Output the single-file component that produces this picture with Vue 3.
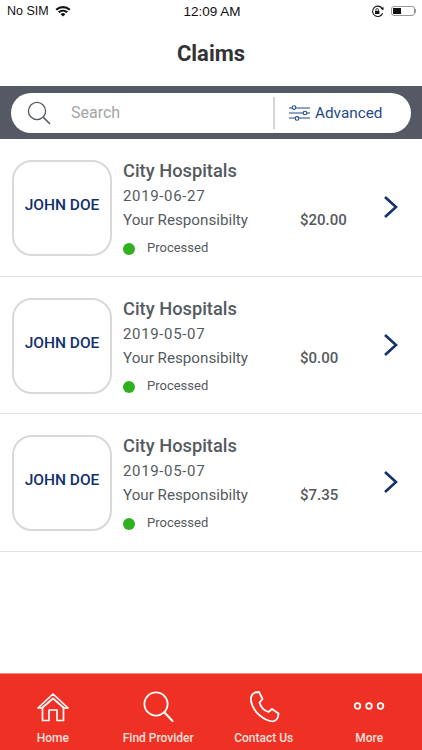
<script setup>
const claims = [
  { id: 1, name: 'JOHN DOE', provider: 'City Hospitals', date: '2019-06-27', amount: '$20.00', status: 'Processed' },
  { id: 2, name: 'JOHN DOE', provider: 'City Hospitals', date: '2019-05-07', amount: '$0.00', status: 'Processed' },
  { id: 3, name: 'JOHN DOE', provider: 'City Hospitals', date: '2019-05-07', amount: '$7.35', status: 'Processed' },
]
</script>

<template>
  <div class="app">
    <div class="status">
      <div class="status-left">
        <span>No SIM</span>
        <svg class="wifi" width="16" height="12" viewBox="0 0 16 12">
          <path d="M0.5 4 A11 11 0 0 1 15.5 4 L14 5.6 A9 9 0 0 0 2 5.6 Z" fill="#111" />
          <path d="M3 6.6 A7.4 7.4 0 0 1 13 6.6 L11.5 8.1 A5.2 5.2 0 0 0 4.5 8.1 Z" fill="#111" />
          <path d="M5.6 9.2 A3.4 3.4 0 0 1 10.4 9.2 L8 11.6 Z" fill="#111" />
        </svg>
      </div>
      <span class="time">12:09 AM</span>
      <div class="status-right">
        <svg width="13" height="13" viewBox="0 0 13 13">
          <path d="M11.2 3.6 A5.2 5.2 0 1 0 11.6 8.2" fill="none" stroke="#111" stroke-width="1.1" />
          <path d="M9.6 3.8 L12.4 5.2 L12.6 2 Z" fill="#111" />
          <rect x="4" y="5.8" width="4.4" height="3.2" fill="#111" />
          <path d="M4.9 5.8 V4.8 A1.3 1.3 0 0 1 7.5 4.8 V5.8" fill="none" stroke="#111" stroke-width="0.8" />
        </svg>
        <div class="battery"><div class="battery-fill"></div></div>
        <div class="battery-tip"></div>
      </div>
    </div>

    <h1 class="title">Claims</h1>

    <div class="search-bar">
      <div class="search-box">
        <svg class="search-icon" width="24" height="24" viewBox="0 0 24 24">
          <circle cx="10" cy="10" r="8.6" fill="none" stroke="#555a60" stroke-width="1.3" />
          <path d="M16.4 16.4 L23 23" stroke="#555a60" stroke-width="1.5" fill="none" />
        </svg>
        <span class="placeholder">Search</span>
        <div class="divider"></div>
        <svg class="filter-icon" width="22" height="18" viewBox="0 0 22 18">
          <g fill="none" stroke="#1f4a8a" stroke-width="1.1">
            <path d="M0 4 H3 M7 4 H21" />
            <circle cx="5" cy="3.6" r="1.8" />
            <path d="M0 9 H14 M18 9 H21" />
            <circle cx="16" cy="9" r="1.8" />
            <path d="M0 14 H6 M10 14 H21" />
            <circle cx="8" cy="14.4" r="1.8" />
          </g>
        </svg>
        <span class="advanced">Advanced</span>
      </div>
    </div>

    <div class="list">
      <div v-for="claim in claims" :key="claim.id" class="row">
        <div class="avatar">{{ claim.name }}</div>
        <div class="info">
          <div class="provider">{{ claim.provider }}</div>
          <div class="date">{{ claim.date }}</div>
          <div class="resp">
            <span class="resp-label">Your Responsibilty</span>
            <span class="amount">{{ claim.amount }}</span>
          </div>
          <div class="state">
            <span class="dot"></span>
            <span>{{ claim.status }}</span>
          </div>
        </div>
        <svg class="chevron" width="16" height="24" viewBox="0 0 16 24">
          <path d="M2 2 L13 12 L2 22" fill="none" stroke="#12306b" stroke-width="2.6" />
        </svg>
      </div>
    </div>

    <nav class="tabs">
      <div class="tab">
        <svg width="32" height="32" viewBox="0 0 32 32">
          <g fill="none" stroke="#fff" stroke-width="1.7" stroke-linejoin="round" stroke-linecap="round">
            <path d="M1 17 L16 3 L31 17 L27 17 L16 7.5 L5 17 Z" />
            <path d="M5.5 16.5 V29.5 H12 V19 H20 V29.5 H26.5 V16.5" />
          </g>
        </svg>
        <span>Home</span>
      </div>
      <div class="tab">
        <svg width="32" height="32" viewBox="0 0 32 32">
          <circle cx="14" cy="13" r="11.6" fill="none" stroke="#fff" stroke-width="1.8" />
          <path d="M22.5 21.5 L30.5 30" stroke="#fff" stroke-width="2" stroke-linecap="round" />
        </svg>
        <span>Find Provider</span>
      </div>
      <div class="tab">
        <svg width="32" height="32" viewBox="0 0 32 32">
          <path d="M7 1.5 L11 1 L14.5 8 L11.5 11.5 C12.5 15.5 16 19.5 20.5 21 L24 18 L30.5 22.5 L30 26 C28.5 29.5 25.5 31 22 30 C12 27 4.5 18.5 3 10 C2.5 6 4 3 7 1.5 Z" fill="none" stroke="#fff" stroke-width="1.8" stroke-linejoin="round" />
        </svg>
        <span>Contact Us</span>
      </div>
      <div class="tab">
        <svg width="32" height="32" viewBox="0 0 32 32">
          <g fill="none" stroke="#fff" stroke-width="1.8">
            <circle cx="4.5" cy="15" r="2.8" />
            <circle cx="16" cy="15" r="2.8" />
            <circle cx="27.5" cy="15" r="2.8" />
          </g>
        </svg>
        <span>More</span>
      </div>
    </nav>
  </div>
</template>

<style scoped>
.app {
  width: 422px;
  height: 750px;
  display: flex;
  flex-direction: column;
  background: #fff;
  font-family: Roboto, "Liberation Sans", sans-serif;
  overflow: hidden;
}

.status {
  height: 22px;
  padding: 0 5px 0 7px;
  display: grid;
  grid-template-columns: 1fr auto 1fr;
  align-items: center;
  font-family: "Liberation Sans", sans-serif;
  font-size: 12.5px;
  color: #111;
}

.status-left {
  display: flex;
  align-items: center;
  gap: 6px;
}

.time {
  font-size: 13.5px;
}

.status-right {
  display: flex;
  align-items: center;
  justify-content: flex-end;
  gap: 7px;
  padding-right: 1px;
}

.battery {
  width: 24px;
  height: 10px;
  border: 1px solid #999;
  border-radius: 3px;
  padding: 1px;
  box-sizing: border-box;
}

.battery-fill {
  width: 8px;
  height: 100%;
  background: #111;
}

.battery-tip {
  width: 1px;
  height: 4px;
  background: #999;
  margin-left: -7px;
}

.title {
  margin: 0;
  height: 64px;
  line-height: 63px;
  text-align: center;
  font-size: 22px;
  font-weight: 700;
  color: #333;
}

.search-bar {
  background: #545963;
  height: 53px;
  padding: 7px 11px;
  box-sizing: border-box;
}

.search-box {
  height: 40px;
  background: #fff;
  border-radius: 20px;
  display: flex;
  align-items: center;
  padding-left: 16px;
}

.placeholder {
  margin-left: 20px;
  margin-bottom: 2px;
  font-size: 16px;
  color: #a5a5a5;
  width: 202px;
}

.divider {
  width: 2px;
  height: 32px;
  background: #d5d5d5;
}

.filter-icon {
  margin-left: 14px;
}

.advanced {
  margin-left: 4px;
  font-size: 15.3px;
  color: #1f4a8a;
}

.list {
  flex: 1;
}

.row {
  height: 137.5px;
  box-sizing: border-box;
  border-bottom: 1px solid #e2e2e2;
  padding: 21px 0 0 12px;
  display: flex;
}

.avatar {
  width: 100px;
  height: 96px;
  box-sizing: border-box;
  border: 2px solid #d9d9d9;
  border-radius: 20px;
  padding-bottom: 6px;
  display: flex;
  align-items: center;
  justify-content: center;
  font-size: 15.5px;
  font-weight: 500;
  color: #12306b;
}

.info {
  margin-left: 11px;
  width: 224px;
  color: #555a60;
}

.provider {
  font-size: 18.3px;
  font-weight: 500;
  line-height: 22px;
}

.date {
  font-size: 15px;
  line-height: 20px;
  margin-top: 4px;
  letter-spacing: 0.65px;
}

.resp {
  display: flex;
  font-size: 15.2px;
  line-height: 20px;
  margin-top: 4px;
}

.resp-label {
  width: 177px;
}

.amount {
  font-weight: 500;
  font-size: 15px;
}

.state {
  display: flex;
  align-items: center;
  font-size: 13px;
  line-height: 20px;
  margin-top: 8px;
}

.dot {
  width: 12px;
  height: 12px;
  border-radius: 50%;
  background: #2fb01f;
  margin-right: 12px;
  margin-top: 2px;
}

.chevron {
  margin-left: 36px;
  margin-top: 35px;
}

.tabs {
  height: 77px;
  background: #ee3124;
  border-top: 1px solid #f58a80;
  box-sizing: border-box;
  display: flex;
}

.tab {
  width: 105.5px;
  display: flex;
  flex-direction: column;
  align-items: center;
  padding-top: 17px;
  color: #fde0dc;
  font-size: 12px;
  font-weight: 500;
}

.tab span {
  margin-top: 8px;
}
</style>

<style>
html, body {
  margin: 0;
  background: #fff;
}
</style>
